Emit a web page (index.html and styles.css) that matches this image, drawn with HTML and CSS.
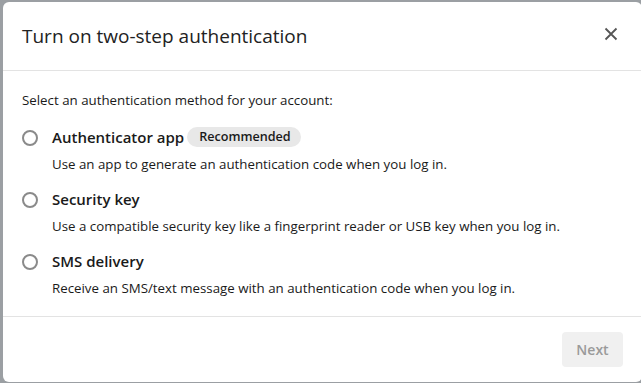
FILE: index.html
```html
<!DOCTYPE html>
<html lang="en">
<head>
  <meta charset="UTF-8">
  <title>Two-step authentication</title>
  <link rel="stylesheet" href="styles.css">
</head>
<body>

  <div class="modal">
    <div class="modal-header">
      <div class="modal-title">Turn on two-step authentication</div>
      <svg class="close" width="14" height="14" viewBox="0 0 14 14">
        <path d="M1.5 1.5 L12.5 12.5 M12.5 1.5 L1.5 12.5" stroke="#555" stroke-width="1.8" fill="none"/>
      </svg>
    </div>

    <div class="modal-body">
      <p class="lead">Select an authentication method for your account:</p>

      <div class="option">
        <span class="radio"></span>
        <div class="option-text">
          <div class="option-title">Authenticator app <span class="badge">Recommended</span></div>
          <div class="option-desc">Use an app to generate an authentication code when you log in.</div>
        </div>
      </div>

      <div class="option">
        <span class="radio"></span>
        <div class="option-text">
          <div class="option-title">Security key</div>
          <div class="option-desc">Use a compatible security key like a fingerprint reader or USB key when you log in.</div>
        </div>
      </div>

      <div class="option">
        <span class="radio"></span>
        <div class="option-text">
          <div class="option-title">SMS delivery</div>
          <div class="option-desc">Receive an SMS/text message with an authentication code when you log in.</div>
        </div>
      </div>
    </div>

    <div class="modal-footer">
      <button class="btn-next" disabled>Next</button>
    </div>
  </div>

</body>
</html>
```

FILE: styles.css
```css
body {
  margin: 0;
  font-family: 'Open Sans', sans-serif;
  background-color: #9b9fa3;
  color: #1a1a1a;
  overflow: hidden;
}
.modal {
  margin: 2px 0 0 3px;
  width: 639px;
  height: 380px;
  background: #fff;
  border-radius: 6px;
  display: flex;
  flex-direction: column;
}
.modal-header {
  height: 68px;
  display: flex;
  align-items: center;
  padding: 0 24px 0 19px;
  border-bottom: 1px solid #e3e3e3;
}
.modal-title {
  flex: 1;
  font-size: 19px;
  color: #222;
}
.close {
  display: block;
  margin-bottom: 4px;
}
.modal-body {
  flex: 1;
  padding: 20px 19px 0;
  border-bottom: 1px solid #e3e3e3;
}
.lead {
  margin: 0 0 14px;
  font-size: 13.3px;
}
.option {
  display: flex;
  align-items: flex-start;
  margin-bottom: 11px;
}
.radio {
  width: 12px;
  height: 12px;
  border: 2px solid #8a8a8a;
  border-radius: 50%;
  margin: 7px 14px 0 0;
  flex-shrink: 0;
}
.option-title {
  font-size: 15px;
  font-weight: 600;
  line-height: 28px;
  display: flex;
  align-items: center;
}
.badge {
  font-size: 12.6px;
  font-weight: 600;
  background: #e8e8e8;
  border-radius: 10px;
  padding: 0 10px 0 12px;
  line-height: 20px;
  margin-left: 3px;
}
.option-desc {
  font-size: 13.3px;
  line-height: 20px;
  margin-top: 3px;
}
.modal-footer {
  height: 65px;
  display: flex;
  align-items: center;
  justify-content: flex-end;
  padding-right: 19px;
}
.btn-next {
  font-family: 'Open Sans', sans-serif;
  font-size: 14px;
  font-weight: 600;
  color: #9a9a9a;
  background: #f0f0f0;
  border: none;
  border-radius: 4px;
  width: 61px;
  height: 35px;
}
```
